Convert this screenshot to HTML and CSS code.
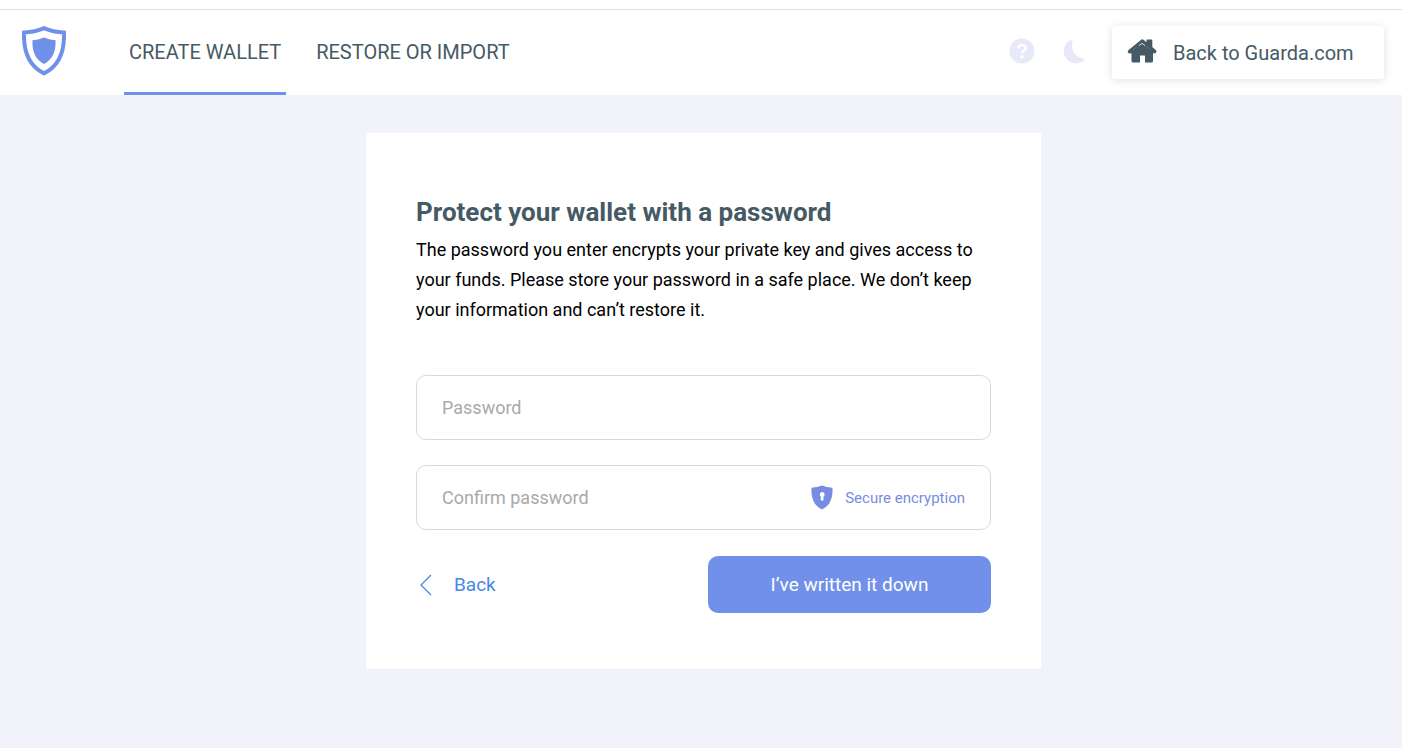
FILE: index.html
```html
<!DOCTYPE html>
<html lang="en">

<head>
    <meta charset="UTF-8">
    <meta name="viewport" content="width=device-width, initial-scale=1.0">
    <title>Guarda Wallet</title>
    <link rel="stylesheet" href="styles.css">
</head>

<body>
    <header class="header">
        <a href="#" class="logo" aria-label="Guarda">
            <svg width="44" height="50" viewBox="0 0 44 50">
                <path d="M22 2.2 C28 4.8 35 6.3 42 6.6 C42.6 25 37.5 40 22 47.4 C6.5 40 1.4 25 2 6.6 C9 6.3 16 4.8 22 2.2 Z" fill="none" stroke="#7190e9" stroke-width="4" />
                <path d="M22 11.5 Q28 14 33.5 14.2 C34 24 31.5 33 22 38 C12.5 33 10 24 10.5 14.2 Q16 14 22 11.5 Z" fill="#7190e9" />
            </svg>
        </a>
        <nav class="tabs">
            <a href="#" class="tab active">CREATE WALLET</a>
            <a href="#" class="tab">RESTORE OR IMPORT</a>
        </nav>
        <div class="header-actions">
            <button type="button" class="icon-btn" aria-label="Help">
                <svg width="26" height="26" viewBox="0 0 26 26">
                    <circle cx="13" cy="13" r="12.5" fill="#e7e8f8" />
                    <path d="M9.3 10.6 C9.3 6 16.7 6 16.7 10.3 C16.7 12.8 13 12.6 13 15.2" fill="none" stroke="#fff" stroke-width="2.7" />
                    <circle cx="13" cy="18.9" r="1.8" fill="#fff" />
                </svg>
            </button>
            <button type="button" class="icon-btn" aria-label="Dark mode">
                <svg width="26" height="26" viewBox="0 0 26 26">
                    <path d="M11 1.5 C7.5 11 13 20.5 23.5 20.8 C20.5 24.5 16 26 11.5 25 C5 23.5 1 18 2 11.5 C2.8 6.5 6 2.6 11 1.5 Z" fill="#e7e8f8" />
                </svg>
            </button>
            <a href="#" class="home-link">
                <svg width="30" height="24" viewBox="0 0 30 24">
                    <path d="M14.5 0.5 Q15.5 0 16.5 0.8 L19.5 3.2 V1 Q19.5 0.5 20 0.5 H24.5 Q25.3 0.5 25.3 1.3 V8 L29 11.3 Q30 12.5 29 13.7 Q28 14.6 26 14.2 V22 Q26 23.5 24.5 23.5 H18 V16.5 H13 V23.5 H6 Q4.5 23.5 4.5 22 V14.2 Q2 14.8 1 13.5 Q0.2 12.3 1.3 11.3 Z" fill="#455a64" />
                    <path d="M11.8 6.8 L15 4.3 L18.2 6.8" fill="none" stroke="#fff" stroke-width="0.8" />
                    <path d="M6.5 10.5 L9.5 8.2 M20.5 8.2 L23 10" fill="none" stroke="#fff" stroke-width="0.6" stroke-dasharray="1 1.5" opacity="0.6" />
                </svg>
                Back to Guarda.com
            </a>
        </div>
    </header>

    <main class="page">
        <form class="card">
            <h1>Protect your wallet with a password</h1>
            <p>The password you enter encrypts your private key and gives access to your funds. Please store your password in a safe place. We don’t keep your information and can’t restore it.</p>

            <label class="field">
                <input type="password" placeholder="Password" aria-label="Password">
            </label>

            <label class="field">
                <input type="password" placeholder="Confirm password" aria-label="Confirm password">
                <span class="secure">
                    <svg width="22" height="25" viewBox="0 0 22 25">
                        <path d="M11 0.5 Q15.5 2.5 21.5 2.8 C22 12.5 19.5 20.5 11 24.5 C2.5 20.5 0 12.5 0.5 2.8 Q6.5 2.5 11 0.5 Z" fill="#788ce2" />
                        <path d="M8.8 9.5 A2.4 2.4 0 1 1 12.5 11.5 V15.5 H9.8 V11.5 Q8.8 10.8 8.8 9.5 Z" fill="#fff" />
                    </svg>
                    Secure encryption
                </span>
            </label>

            <div class="actions">
                <a href="#" class="back">
                    <svg width="12" height="22" viewBox="0 0 12 22">
                        <path d="M11 1 L1 11 L11 21" fill="none" stroke="#4a86e8" stroke-width="1.3" />
                    </svg>
                    Back
                </a>
                <button type="button" class="submit">I’ve written it down</button>
            </div>
        </form>
    </main>
</body>

</html>
```

FILE: styles.css
```css
* {
    margin: 0;
    padding: 0;
    box-sizing: border-box;
}

body {
    font-family: Roboto, "Liberation Sans", sans-serif;
    background-color: #f1f2fa;
    border-top: 9px solid #fff;
    min-height: 100vh;
}

a {
    color: inherit;
    text-decoration: none;
}

svg {
    display: block;
    flex-shrink: 0;
}

button {
    font-family: inherit;
    border: none;
    cursor: pointer;
}

.header {
    display: flex;
    align-items: center;
    height: 86px;
    padding: 0 18px 0 22px;
    background-color: #fff;
    border-top: 1px solid #dfdfe1;
    color: #455a64;
    font-size: 20px;
}

.logo {
    margin-right: 58px;
    padding-bottom: 4px;
}

.tabs {
    display: flex;
    align-self: stretch;
    gap: 25px;
}

.tab {
    display: flex;
    align-items: center;
    padding: 1px 5px 0;
    border-bottom: 3px solid transparent;
}

.tab.active {
    border-bottom-color: #7190e9;
}

.header-actions {
    display: flex;
    align-items: center;
    gap: 24px;
    margin-left: auto;
    padding-bottom: 1px;
}

.icon-btn {
    width: 29px;
    padding-bottom: 3px;
    background: none;
}

.icon-btn svg {
    margin-left: auto;
}

.home-link {
    display: flex;
    align-items: center;
    gap: 16px;
    width: 272px;
    height: 53px;
    padding: 2px 15px 0;
    border-radius: 4px;
    box-shadow: 0 1px 8px rgba(0, 0, 0, 0.12);
}

.home-link svg {
    margin-bottom: 5px;
}

.page {
    display: flex;
    justify-content: center;
    padding: 38px 0 38px 5px;
}

.card {
    width: 675px;
    padding: 63px 50px 56px;
    background-color: #fff;
}

h1 {
    font-size: 26px;
    line-height: 32px;
    margin-bottom: 7px;
    color: #455a64;
}

p {
    font-size: 18px;
    line-height: 30px;
    margin-bottom: 50px;
    color: #000;
}

.field {
    display: flex;
    align-items: center;
    height: 65px;
    margin-bottom: 25px;
    padding: 0 25px;
    border: 1px solid #d9d9dc;
    border-radius: 10px;
}

.field input {
    flex: 1;
    min-width: 0;
    border: none;
    outline: none;
    background: none;
    font-family: inherit;
    font-size: 18px;
}

.field input::placeholder {
    color: #a9a9a9;
}

.secure {
    display: flex;
    align-items: center;
    gap: 12px;
    font-size: 15px;
    color: #788ce2;
}

.actions {
    display: flex;
    align-items: center;
    justify-content: space-between;
    padding-top: 1px;
}

.back {
    display: flex;
    align-items: center;
    gap: 22px;
    padding-left: 4px;
    font-size: 19px;
    color: #4a86e8;
}

.submit {
    width: 283px;
    height: 57px;
    border-radius: 10px;
    background-color: #7190e9;
    color: #fff;
    font-size: 19px;
}
```
